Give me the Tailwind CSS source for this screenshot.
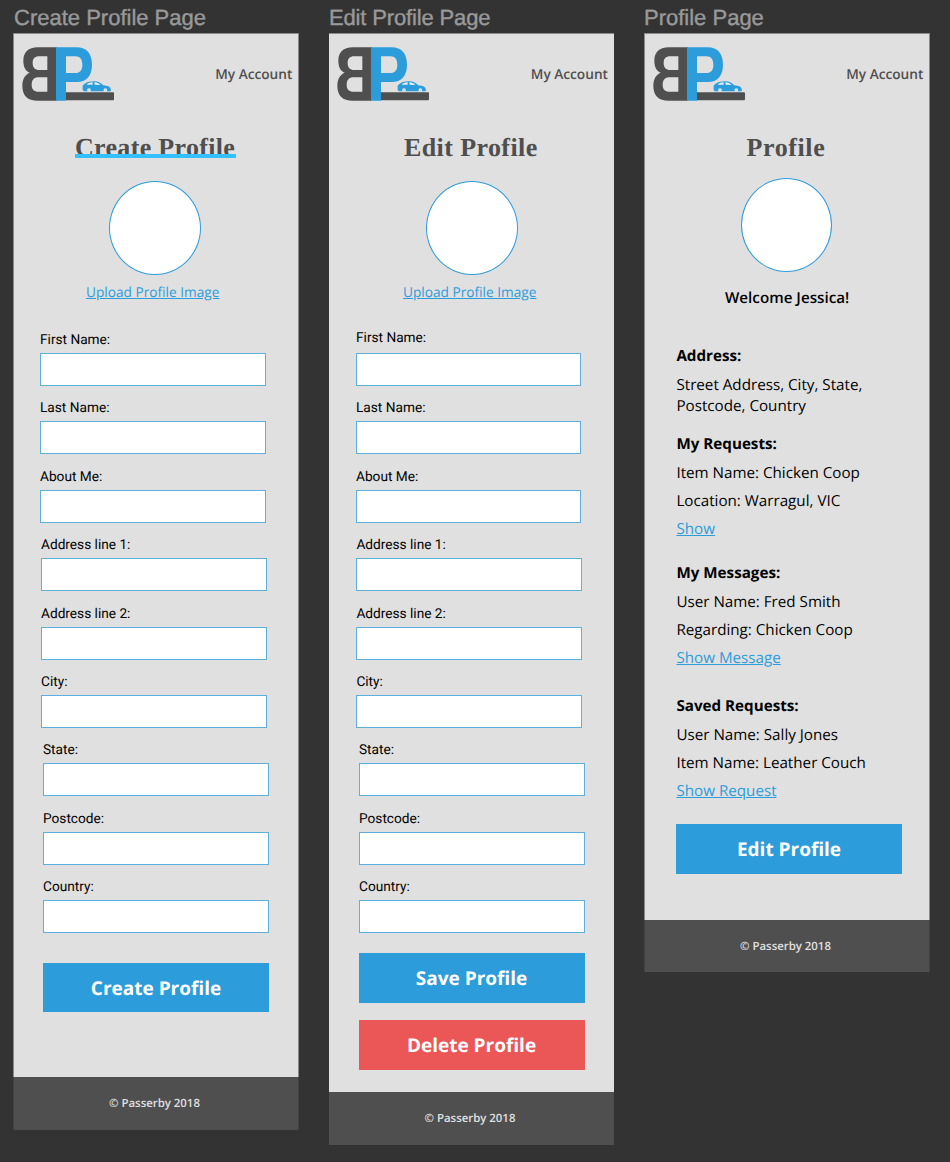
<!DOCTYPE html>
<html lang="en">
<head>
<meta charset="utf-8">
<title>Profile pages</title>
<script src="https://cdn.jsdelivr.net/npm/@tailwindcss/browser@4"></script>
</head>
<body class="bg-[#333333] w-[950px] h-[1162px] overflow-hidden font-['Open_Sans','Noto_Sans',sans-serif] text-black [text-rendering:geometricPrecision]">
<svg class="hidden">
  <symbol id="logo" viewBox="36 32 278 163">
    <path fill="#4f4f4f" fill-rule="evenodd" d="M141 33H83C55 33 40 48 40 73C40 92 47 104 59 109C45 115 37 128 37 148C37 178 53 193 83 193H141ZM112 60V101H88C75 101 68 94 68 80C68 67 74 60 88 60ZM112 123V166H86C72 166 65 159 65 145C65 131 72 123 86 123Z"/>
    <path fill="#4f4f4f" d="M165 168H309Q312 168 312 171V189Q312 192 309 192H165Z"/>
    <path fill="#2d9cdb" fill-rule="evenodd" d="M138 33H200C230 33 246 52 246 85C246 118 230 137 200 137H168V193H138ZM168 60V110H196C210 110 217 101 217 85C217 69 210 60 196 60Z"/>
    <path fill="#2d9cdb" d="M218 152C217 147 220 145 224 142C232 137 241 135 253 135C265 135 271 139 280 147C292 148 301 151 302 158L303 163L299 165H222L218 161Z"/>
    <path fill="#e8eef2" d="M230 145C235 140 241 138 248 138V145ZM253 138C261 138 266 141 271 146L254 145Z"/>
    <circle cx="237" cy="161" r="5.500" fill="#e8eef2"/><circle cx="237" cy="161" r="2" fill="#9ccbe8"/>
    <circle cx="286" cy="161" r="5.500" fill="#e8eef2"/><circle cx="286" cy="161" r="2" fill="#9ccbe8"/>
  </symbol>
</svg>
<main class="flex items-start pl-[13px]">

  <section class="w-[286px] mr-[30px]">
    <h2 class="h-[33px] pl-px pt-[5px] text-[22px] leading-[25px] text-[#999999] [-webkit-text-stroke:0.4px_#999999] font-['Liberation_Sans',sans-serif] whitespace-nowrap">Create Profile Page</h2>
    <div class="h-[1044px] bg-[#e0e0e0] border-x border-t border-[#8a8a8a]">
      <header class="h-20 pl-2 pr-[5.6px] flex items-center justify-between">
        <svg class="w-[92.67px] h-[54.33px]"><use href="#logo"/></svg>
        <span class="pt-0.5 text-[13.68px] font-semibold text-[#4f4f4f] whitespace-nowrap">My Account</span>
      </header>
      <div class="h-[67px] pt-[19px] pl-[61px]">
        <h1 class="relative w-[161px] h-[30px] leading-[30px] text-[26px] tracking-[0.32px] font-bold text-[#4f4f4f] font-['Liberation_Serif',serif] whitespace-nowrap">Create Profile<span class="absolute left-0 top-[21px] w-[161px] h-1 bg-[#33c0ff]"></span></h1>
      </div>
      <div class="ml-[95px] w-[92px] h-[94px] rounded-[50%] bg-white border border-[#2d9cdb]"></div>
      <a class="block mt-2 ml-[72px] h-5 leading-5 text-[13.68px] text-[#2d9cdb] underline whitespace-nowrap">Upload Profile Image</a>
      <form class="pt-[26px] pl-[26px] font-[Roboto,sans-serif] text-[13.68px]">
        <div class="h-[68.4px]"><label class="block h-6 leading-[22px]">First Name:</label><div class="w-[226px] h-[33px] bg-white border border-[#5cafdf]"></div></div>
        <div class="h-[68.4px]"><label class="block h-6 leading-[23px]">Last Name:</label><div class="w-[226px] h-[33px] bg-white border border-[#5cafdf]"></div></div>
        <div class="h-[68.4px]"><label class="block h-6 leading-[23px]">About Me:</label><div class="w-[226px] h-[33px] bg-white border border-[#5cafdf]"></div></div>
        <div class="h-[68.4px] pl-px"><label class="block h-6 leading-[23px]">Address line 1:</label><div class="w-[226px] h-[33px] bg-white border border-[#5cafdf]"></div></div>
        <div class="h-[68.4px] pl-px"><label class="block h-6 leading-[23px]">Address line 2:</label><div class="w-[226px] h-[33px] bg-white border border-[#5cafdf]"></div></div>
        <div class="h-[68.4px] pl-px"><label class="block h-6 leading-[23px]">City:</label><div class="w-[226px] h-[33px] bg-white border border-[#5cafdf]"></div></div>
        <div class="h-[68.4px] pl-[3px]"><label class="block h-6 leading-[23px]">State:</label><div class="w-[226px] h-[33px] bg-white border border-[#5cafdf]"></div></div>
        <div class="h-[68.4px] pl-[3px]"><label class="block h-6 leading-[23px]">Postcode:</label><div class="w-[226px] h-[33px] bg-white border border-[#5cafdf]"></div></div>
        <div class="h-[57px] pl-[3px]"><label class="block h-6 leading-[23px]">Country:</label><div class="w-[226px] h-[33px] bg-white border border-[#5cafdf]"></div></div>
      </form>
      <div class="mt-[30px] ml-[29px] w-[226px] h-[49px] bg-[#2d9cdb] flex items-center justify-center pt-px text-[19px] font-bold text-white">Create Profile</div>
    </div>
    <footer class="h-[53px] bg-[#4f4f4f] border-x border-[#424242] flex items-center justify-center pr-[3px] pt-px text-[11.4px] font-semibold text-[#e0e0e0]">© Passerby 2018</footer>
  </section>

  <section class="w-[285px] mr-[30px]">
    <h2 class="h-[33px] pt-[5px] text-[22px] leading-[25px] tracking-[-0.15px] text-[#999999] [-webkit-text-stroke:0.4px_#999999] font-['Liberation_Sans',sans-serif] whitespace-nowrap">Edit Profile Page</h2>
    <div class="h-[1059px] bg-[#e0e0e0] border-t border-[#8a8a8a]">
      <header class="h-20 pl-2 pr-[6px] flex items-center justify-between">
        <svg class="w-[92.67px] h-[54.33px]"><use href="#logo"/></svg>
        <span class="pt-0.5 text-[13.68px] font-semibold text-[#4f4f4f] whitespace-nowrap">My Account</span>
      </header>
      <div class="h-[67px] pt-[19px] pl-[75px]">
        <h1 class="h-[30px] leading-[30px] text-[26px] tracking-[0.4px] font-bold text-[#4f4f4f] font-['Liberation_Serif',serif] whitespace-nowrap">Edit Profile</h1>
      </div>
      <div class="ml-[97px] w-[92px] h-[94px] rounded-[50%] bg-white border border-[#2d9cdb]"></div>
      <a class="block mt-2 ml-[74px] h-5 leading-5 text-[13.68px] text-[#2d9cdb] underline whitespace-nowrap">Upload Profile Image</a>
      <form class="pt-[26px] pl-[27px] font-[Roboto,sans-serif] text-[13.68px]">
        <div class="h-[68.4px]"><label class="block h-6 leading-[19px]">First Name:</label><div class="w-[225px] h-[33px] bg-white border border-[#5cafdf]"></div></div>
        <div class="h-[68.4px]"><label class="block h-6 leading-[23px]">Last Name:</label><div class="w-[225px] h-[33px] bg-white border border-[#5cafdf]"></div></div>
        <div class="h-[68.4px]"><label class="block h-6 leading-[23px]">About Me:</label><div class="w-[225px] h-[33px] bg-white border border-[#5cafdf]"></div></div>
        <div class="h-[68.4px] pl-[0.4px]"><label class="block h-6 leading-[23px]">Address line 1:</label><div class="w-[226px] h-[33px] bg-white border border-[#5cafdf]"></div></div>
        <div class="h-[68.4px] pl-[0.4px]"><label class="block h-6 leading-[23px]">Address line 2:</label><div class="w-[226px] h-[33px] bg-white border border-[#5cafdf]"></div></div>
        <div class="h-[68.4px] pl-[0.4px]"><label class="block h-6 leading-[23px]">City:</label><div class="w-[226px] h-[33px] bg-white border border-[#5cafdf]"></div></div>
        <div class="h-[68.4px] pl-[3px]"><label class="block h-6 leading-[23px]">State:</label><div class="w-[226px] h-[33px] bg-white border border-[#5cafdf]"></div></div>
        <div class="h-[68.4px] pl-[3px]"><label class="block h-6 leading-[23px]">Postcode:</label><div class="w-[226px] h-[33px] bg-white border border-[#5cafdf]"></div></div>
        <div class="h-[57px] pl-[3px]"><label class="block h-6 leading-[23px]">Country:</label><div class="w-[226px] h-[33px] bg-white border border-[#5cafdf]"></div></div>
      </form>
      <div class="mt-5 ml-[30px] w-[226px] h-[50px] bg-[#2d9cdb] flex items-center justify-center pt-px pr-px text-[19px] font-bold text-white">Save Profile</div>
      <div class="mt-[17px] ml-[30px] w-[226px] h-[50px] bg-[#eb5757] flex items-center justify-center pt-px pr-px text-[19px] font-bold text-white">Delete Profile</div>
    </div>
    <footer class="h-[53px] bg-[#4f4f4f] flex items-center justify-center pr-[3px] pt-px text-[11.4px] font-semibold text-[#e0e0e0]">© Passerby 2018</footer>
  </section>

  <section class="w-[286px]">
    <h2 class="h-[33px] pt-[5px] text-[22px] leading-[25px] text-[#999999] [-webkit-text-stroke:0.4px_#999999] font-['Liberation_Sans',sans-serif] whitespace-nowrap">Profile Page</h2>
    <div class="h-[887px] bg-[#e0e0e0] border-x border-t border-[#8a8a8a]">
      <header class="h-20 pl-2 pr-[5.6px] flex items-center justify-between">
        <svg class="w-[92.67px] h-[54.33px]"><use href="#logo"/></svg>
        <span class="pt-0.5 text-[13.68px] font-semibold text-[#4f4f4f] whitespace-nowrap">My Account</span>
      </header>
      <div class="h-16 pt-[19px] pl-[101.5px]">
        <h1 class="h-[30px] leading-[30px] text-[26px] tracking-[0.6px] font-bold text-[#4f4f4f] font-['Liberation_Serif',serif] whitespace-nowrap">Profile</h1>
      </div>
      <div class="ml-24 w-[91px] h-[94px] rounded-[50%] bg-white border border-[#2d9cdb]"></div>
      <p class="mt-4 ml-20 h-[21px] leading-[21px] text-[15.2px] font-semibold whitespace-nowrap">Welcome Jessica!</p>
      <div class="mt-[37px] pl-[31.4px] flex flex-col gap-[17px] text-[15.2px] leading-[21px]">
        <div>
          <h3 class="font-bold mb-2">Address:</h3>
          <p>Street Address, City, State,<br>Postcode, Country</p>
        </div>
        <div class="flex flex-col gap-[7px] mb-[6px]">
          <h3 class="font-bold mb-px">My Requests:</h3>
          <p>Item Name: Chicken Coop</p>
          <p>Location: Warragul, VIC</p>
          <a class="text-[#2d9cdb] underline">Show</a>
        </div>
        <div class="flex flex-col gap-[7px] mb-[10px]">
          <h3 class="font-bold mb-px">My Messages:</h3>
          <p>User Name: Fred Smith</p>
          <p>Regarding: Chicken Coop</p>
          <a class="text-[#2d9cdb] underline">Show Message</a>
        </div>
        <div class="flex flex-col gap-[7px]">
          <h3 class="font-bold mb-px">Saved Requests:</h3>
          <p>User Name: Sally Jones</p>
          <p>Item Name: Leather Couch</p>
          <a class="text-[#2d9cdb] underline">Show Request</a>
        </div>
      </div>
      <div class="mt-[22px] ml-[31px] w-[226px] h-[50px] bg-[#2d9cdb] flex items-center justify-center pt-px text-[19px] font-bold text-white">Edit Profile</div>
    </div>
    <footer class="h-[52px] bg-[#4f4f4f] border-x border-[#424242] flex items-center justify-center pr-[3px] pt-0.5 text-[11.4px] font-semibold text-[#e0e0e0]">© Passerby 2018</footer>
  </section>

</main>
</body>
</html>
